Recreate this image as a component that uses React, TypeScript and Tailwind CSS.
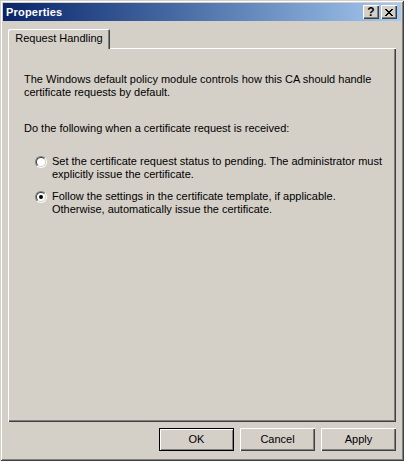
import React from 'react'

function Radio({ checked }: { checked?: boolean }) {
  return (
    <span className="mt-px flex h-3 w-3 shrink-0 rounded-full border border-t-[#808080] border-l-[#808080] border-b-white border-r-white">
      <span className="flex h-full w-full items-center justify-center rounded-full border border-t-[#404040] border-l-[#404040] border-b-[#d4d0c8] border-r-[#d4d0c8] bg-white">
        {checked && <span className="h-1 w-1 rounded-full bg-black" />}
      </span>
    </span>
  )
}

function CaptionButton({ children }: { children: React.ReactNode }) {
  return (
    <div className="flex h-[14px] w-[16px] items-center justify-center bg-[#d4d0c8] shadow-[inset_1px_1px_#fff,inset_-1px_-1px_#404040,inset_-2px_-2px_#808080]">
      {children}
    </div>
  )
}

function PushButton({ label, isDefault = false }: { label: string; isDefault?: boolean }) {
  return (
    <button
      type="button"
      className={
        isDefault
          ? 'flex h-[23px] w-[75px] items-center justify-center border border-black bg-[#d4d0c8] text-[11px] text-black shadow-[inset_1px_1px_#fff,inset_-1px_-1px_#808080]'
          : 'flex h-[23px] w-[75px] items-center justify-center bg-[#d4d0c8] text-[11px] text-black shadow-[inset_1px_1px_#fff,inset_-1px_-1px_#404040,inset_-2px_-2px_#808080]'
      }
    >
      {label}
    </button>
  )
}

export default function App() {
  return (
    <div
      className="flex h-[461px] w-[404px] flex-col bg-[#d4d0c8] p-[3px] text-[11px] leading-[13px] text-black shadow-[inset_1px_1px_#d4d0c8,inset_-1px_-1px_#404040,inset_2px_2px_#fff,inset_-2px_-2px_#808080]"
      style={{ fontFamily: '"Liberation Sans", Arial, sans-serif' }}
    >
      {/* caption */}
      <div className="flex h-[18px] shrink-0 items-center bg-gradient-to-r from-[#0a246a] to-[#a6caf0] pl-[3px] pr-[4px]">
        <span className="text-[11px] font-bold tracking-[0.2px] text-white">Properties</span>
        <div className="ml-auto flex gap-[2px]">
          <CaptionButton>
            <span className="text-[12px] font-bold leading-none text-black">?</span>
          </CaptionButton>
          <CaptionButton>
            <svg width="8" height="7" viewBox="0 0 8 7" shapeRendering="crispEdges">
              <path
                d="M0 0h2v1H0zM6 0h2v1H6zM1 1h2v1H1zM5 1h2v1H5zM2 2h4v1H2zM3 3h2v1H3zM2 4h4v1H2zM1 5h2v1H1zM5 5h2v1H5zM0 6h2v1H0zM6 6h2v1H6z"
                fill="#000"
              />
            </svg>
          </CaptionButton>
        </div>
      </div>

      {/* tabs */}
      <div className="mx-[5px] mt-[8px] flex flex-col">
        <div className="flex h-[19px]">
          <div className="relative z-10 flex h-[20px] w-[102px] items-center justify-center rounded-t-[2px] bg-[#d4d0c8] pb-px shadow-[inset_1px_1px_#fff,inset_-1px_0_#404040,inset_-2px_0_#808080]">
            Request Handling
          </div>
        </div>
        <div className="flex h-[374px] flex-col bg-[#d4d0c8] pl-[16px] pr-[12px] pt-[25px] shadow-[inset_1px_1px_#fff,inset_-1px_-1px_#404040,inset_-2px_-2px_#808080]">
          <p>
            The Windows default policy module controls how this CA should handle
            <br />
            certificate requests by default.
          </p>
          <p className="mt-[23px]">Do the following when a certificate request is received:</p>
          <div className="mt-[20px] flex gap-[5px] pl-[11px]">
            <Radio />
            <span>
              Set the certificate request status to pending. The administrator must
              <br />
              explicitly issue the certificate.
            </span>
          </div>
          <div className="mt-[9px] flex gap-[5px] pl-[11px]">
            <Radio checked />
            <span>
              Follow the settings in the certificate template, if applicable.
              <br />
              Otherwise, automatically issue the certificate.
            </span>
          </div>
        </div>
      </div>

      {/* buttons */}
      <div className="mx-[5px] mt-[6px] flex justify-end gap-[6px]">
        <PushButton label="OK" isDefault />
        <PushButton label="Cancel" />
        <PushButton label="Apply" />
      </div>
    </div>
  )
}
